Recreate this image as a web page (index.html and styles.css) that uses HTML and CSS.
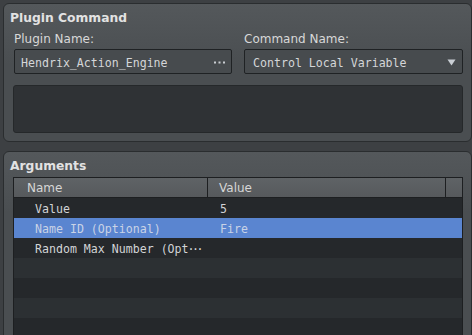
FILE: index.html
```html
<!DOCTYPE html>
<html>
<head>
<meta charset="utf-8">
<link rel="stylesheet" href="styles.css">
</head>
<body>
<div class="page">
  <section class="group group-top">
    <div class="group-title">Plugin Command</div>
    <div class="fields">
      <div class="field">
        <div class="label">Plugin Name:</div>
        <div class="input">
          <span class="mono">Hendrix_Action_Engine</span>
          <svg class="dots" width="11" height="3" viewBox="0 0 11 3"><rect x="0" y="0.5" width="2" height="2" fill="#c9cdd1"/><rect x="4.5" y="0.5" width="2" height="2" fill="#c9cdd1"/><rect x="9" y="0.5" width="2" height="2" fill="#c9cdd1"/></svg>
        </div>
      </div>
      <div class="field">
        <div class="label">Command Name:</div>
        <div class="input select">
          <span class="mono">Control Local Variable</span>
          <svg class="arrow" width="9" height="7" viewBox="0 0 9 7"><path d="M0.5 0.5 L8.5 0.5 L4.5 6.5 Z" fill="#c9ced4"/></svg>
        </div>
      </div>
    </div>
    <div class="textarea"></div>
  </section>
  <section class="group group-args">
    <div class="group-title">Arguments</div>
    <div class="table">
      <div class="thead">
        <div class="th th-name">Name</div>
        <div class="th th-value">Value</div>
        <div class="th th-corner"></div>
      </div>
      <div class="row">
        <div class="td td-name">Value</div>
        <div class="td td-value">5</div>
      </div>
      <div class="row alt selected">
        <div class="td td-name">Name ID (Optional)</div>
        <div class="td td-value">Fire</div>
      </div>
      <div class="row">
        <div class="td td-name">Random Max Number (Opt<span class="ellipsis">···</span></div>
        <div class="td td-value"></div>
      </div>
      <div class="row alt"></div>
      <div class="row"></div>
      <div class="row alt"></div>
      <div class="row"></div>
    </div>
  </section>
</div>
</body>
</html>
```

FILE: styles.css
```css
* { box-sizing: border-box; }
html, body {
  margin: 0;
  padding: 0;
  background: #3d4043;
  width: 472px;
  height: 335px;
  overflow: hidden;
}
.page {
  padding: 3px 0 0 3px;
  display: flex;
  flex-direction: column;
  gap: 9px;
  width: 472px;
}
.group {
  width: 469px;
  border: 1px solid #2a2d2f;
  border-radius: 6px;
  background: linear-gradient(#54585b, #4a4e51 60px, #4a4e51);
  padding: 0 8px 0 9px;
  font-family: "DejaVu Sans", sans-serif;
  color: #dcdcdc;
}
.group-top {
  height: 139px;
}
.group-args {
  height: 200px;
}
.group-title {
  font-weight: bold;
  font-size: 12.3px;
  line-height: 16px;
  padding-top: 6px;
  margin-left: -3px;
  color: #e2e2e2;
}
.fields {
  display: flex;
  gap: 12px;
  margin-top: 6px;
}
.field {
  width: 219px;
  display: flex;
  flex-direction: column;
}
.label {
  font-size: 12px;
  line-height: 15px;
  padding-left: 1px;
  color: #d8d8d8;
}
.field + .field .label { padding-left: 0; }
.input {
  margin-top: 2px;
  height: 25px;
  border: 1px solid #1f2224;
  border-radius: 2px;
  background: #474b4e;
  display: flex;
  align-items: center;
  justify-content: space-between;
  padding: 0 6px 0 6px;
  margin-left: 1px;
}
.select { margin-left: 0; padding-right: 6px; padding-left: 8px; }
.mono {
  font-family: "DejaVu Sans Mono", monospace;
  font-size: 11.6px;
  color: #d4d6d8;
  white-space: nowrap;
}
.input .mono {
  display: block;
  padding-top: 3px;
}
.dots { margin-top: 2px; }
.arrow { margin-top: 1px; }
.textarea {
  margin-top: 11px;
  height: 48px;
  background: #2f3235;
  border: 1px solid #25282a;
  border-radius: 3px;
}
.table {
  margin-top: 3px;
  width: 450px;
  border: 1px solid #1d1f21;
  border-bottom: none;
  background: #25282b;
}
.thead {
  display: flex;
  height: 20px;
  background: linear-gradient(#5f6366, #56595c);
  border-bottom: 1px solid #1d1f21;
  font-size: 12px;
  color: #d6d6d6;
}
.th {
  line-height: 17px;
  height: 19px;
  padding-top: 2px;
}
.th-name {
  width: 194px;
  padding-left: 13px;
  border-right: 1px solid #1d1f21;
}
.th-value {
  width: 238px;
  padding-left: 11px;
  border-right: 1px solid #1d1f21;
}
.th-corner { flex: 1; }
.row {
  display: flex;
  height: 20px;
  background: #25282b;
  font-family: "DejaVu Sans Mono", monospace;
  font-size: 11.6px;
  color: #d2d4d6;
  line-height: 18px;
  padding-top: 2px;
  white-space: nowrap;
}
.row.alt { background: #2c3033; }
.row.selected { background: #5a85d0; color: #c9d3e6; }
.td-name { width: 194px; padding-left: 21px; overflow: hidden; }
.td-value { padding-left: 12px; }
.ellipsis { letter-spacing: -2.5px; margin-left: -1px; }
```
